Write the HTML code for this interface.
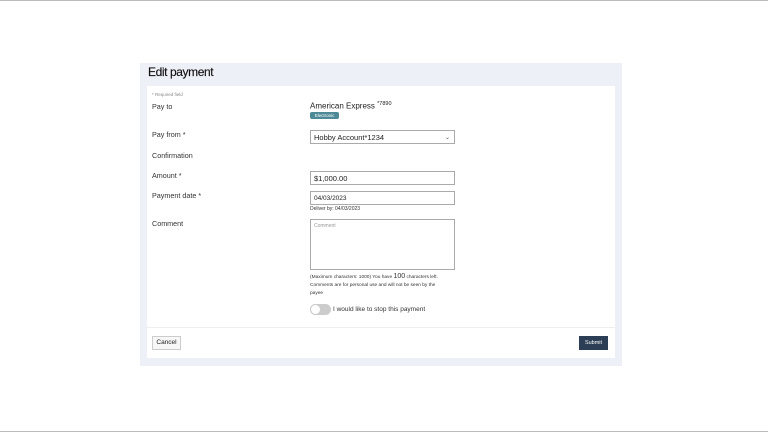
<!DOCTYPE html>
<html><head><style>
*{margin:0;padding:0;box-sizing:border-box}
body{width:768px;height:432px;background:#fff;font-family:"Liberation Sans",Arial,sans-serif;position:relative;overflow:hidden;color:#222}
.a{position:absolute}
.lbl{font-size:7.2px;color:#333;left:152px}
.in{border:1px solid #aaa;background:#fff;font-size:7px;padding-left:3px;display:flex;align-items:center;color:#222}
</style></head><body>
<div class="a" style="left:0;top:0;width:768px;height:1px;background:#bbb"></div>
<div class="a" style="left:0;top:431px;width:768px;height:1px;background:#bbb"></div>
<div class="a" style="left:140px;top:63px;width:482px;height:303px;background:#eef0f7"></div>
<div class="a" style="left:148px;top:65px;font-size:12px;color:#111;letter-spacing:-0.4px;-webkit-text-stroke:0.15px #111">Edit payment</div>
<div class="a" style="left:147px;top:86px;width:468px;height:272px;background:#fff"></div>
<div class="a" style="left:152px;top:92px;font-size:4.5px;color:#888">* Required field</div>
<div class="a lbl" style="top:102px">Pay to</div>
<div class="a" style="left:310px;top:101px;font-size:8px;color:#222">American Express <sup style="font-size:5.5px">*7890</sup></div>
<div class="a" style="left:310px;top:112px;width:29px;height:7px;background:#4d8a96;border-radius:2px;color:#fff;font-size:4.5px;line-height:7px;text-align:center">Electronic</div>
<div class="a lbl" style="top:130px">Pay from *</div>
<div class="a in" style="left:310px;top:130px;width:145px;height:14px;font-size:7.5px">Hobby Account*1234<span style="position:absolute;right:4px;font-size:6px;color:#555">&#8964;</span></div>
<div class="a lbl" style="top:151px">Confirmation</div>
<div class="a lbl" style="top:171px">Amount *</div>
<div class="a in" style="left:310px;top:171px;width:145px;height:14px;font-size:7.5px">$1,000.00</div>
<div class="a lbl" style="top:191px">Payment date *</div>
<div class="a in" style="left:310px;top:191px;width:145px;height:14px;font-size:6.5px">04/03/2023</div>
<div class="a" style="left:310px;top:206px;font-size:5px;color:#333">Deliver by: 04/03/2023</div>
<div class="a lbl" style="top:219px">Comment</div>
<div class="a" style="left:310px;top:219px;width:145px;height:51px;border:1px solid #aaa;font-size:5px;color:#999;padding:3px">Comment</div>
<div class="a" style="left:310px;top:273px;font-size:4.8px;color:#333">(Maximum characters: 1000) You have <span style="font-size:7px">100</span> characters left.</div>
<div class="a" style="left:310px;top:282px;font-size:4.8px;color:#333;width:132px;line-height:7.5px">Comments are for personal use and will not be seen by the payee</div>
<div class="a" style="left:310px;top:304px;width:21px;height:11px;border-radius:6px;background:#ccc"><div style="width:11px;height:11px;border-radius:50%;background:#fff;border:1px solid #ccc"></div></div>
<div class="a" style="left:333px;top:306px;font-size:6.5px;color:#333">I would like to stop this payment</div>
<div class="a" style="left:147px;top:327px;width:468px;height:1px;background:#eee"></div>
<div class="a" style="left:152px;top:336px;width:29px;height:14px;border:1px solid #ccc;background:#f7f7f7;font-size:6.5px;line-height:12px;text-align:center">Cancel</div>
<div class="a" style="left:579px;top:336px;width:29px;height:14px;background:#2c3e55;color:#fff;font-size:5.5px;line-height:14px;text-align:center">Submit</div>
</body></html>
